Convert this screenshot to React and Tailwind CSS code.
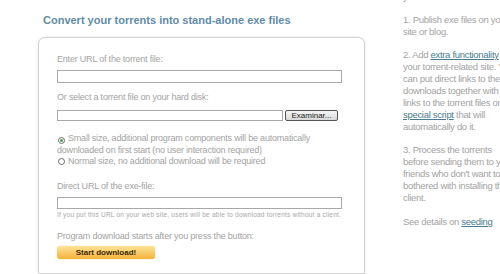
export default function App() {
  const radio = (checked) => (
    <span className="inline-flex items-center justify-center w-[7px] h-[7px] rounded-full border border-[#6b6b6b] bg-white mr-[3px] ml-[1px] align-[-1px]">
      {checked && <span className="w-[3px] h-[3px] rounded-full bg-[#3fa34d]" />}
    </span>
  );
  return (
    <div className="w-[500px] h-[274px] overflow-hidden bg-white flex font-['Liberation_Sans',Arial,sans-serif]">
      <div className="w-[365px] shrink-0 pl-[38px] flex flex-col">
        <h1 className="pl-[5px] pt-[13px] h-[40px] text-[11px] leading-[14px] font-bold text-[#5e8ca7] whitespace-nowrap">
          Convert your torrents into stand-alone exe files
        </h1>
        <div className="h-[260px] rounded-t-[7px] border border-[#d3d3d3] shadow-[0_0_3px_rgba(0,0,0,0.12)] bg-white pl-[18px] pr-[22px] pt-[15px] text-[9px] tracking-[-0.2px] text-[#a3a3a3]">
          <div className="leading-[12px] whitespace-nowrap">Enter URL of the torrent file:</div>
          <div className="mt-[5px] h-[13px] border border-[#a8a8a8] bg-white" />
          <div className="mt-[8px] leading-[12px] whitespace-nowrap">Or select a torrent file on your hard disk:</div>
          <div className="mt-[7px] flex items-center gap-[2px]">
            <div className="w-[226px] h-[11px] border border-[#a8a8a8] bg-white" />
            <div className="w-[53px] h-[11px] border border-[#555] rounded-[2px] bg-gradient-to-b from-[#f6f6f6] to-[#d8d8d8] flex items-center justify-center text-[8px] tracking-normal leading-none text-[#222]">
              Examinar...
            </div>
          </div>
          <div className="mt-[12px] leading-[11.5px] whitespace-nowrap">
            <div>{radio(true)}Small size, additional program components will be automatically</div>
            <div>downloaded on first start (no user interaction required)</div>
            <div>{radio(false)}Normal size, no additional download will be required</div>
          </div>
          <div className="mt-[12.5px] leading-[12px] whitespace-nowrap">Direct URL of the exe-file:</div>
          <div className="mt-[5px] h-[12px] border border-[#a8a8a8] bg-white" />
          <div className="mt-[1px] text-[6.5px] leading-[10px] tracking-[0.22px] whitespace-nowrap text-[#a8a8a8]">
            If you put this URL on your web site, users will be able to download torrents without a client.
          </div>
          <div className="mt-[10px] leading-[12px] whitespace-nowrap">Program download starts after you press the button:</div>
          <div className="mt-[4px] w-[98px] h-[13px] rounded-[3px] bg-gradient-to-b from-[#fde493] to-[#f5b134] shadow-[0_0_1px_rgba(200,140,20,0.6)] flex items-center justify-center text-[8px] tracking-normal font-bold text-[#3b2a05] leading-none">
            Start download!
          </div>
        </div>
      </div>
      <div className="ml-[38px] shrink-0 w-[120px] text-[9.5px] leading-[12px] tracking-[-0.3px] text-[#a3a3a3] whitespace-nowrap">
        <div className="-mt-[9px]">y</div>
        <div className="mt-[11px]">
          <div>1. Publish exe files on your</div>
          <div>site or blog.</div>
        </div>
        <div className="mt-[11px]">
          <div>2. Add <span className="underline text-[#4a7c8e]">extra functionality</span> to</div>
          <div>your torrent-related site. You</div>
          <div>can put direct links to these</div>
          <div>downloads together with</div>
          <div>links to the torrent files or</div>
          <div><span className="underline text-[#4a7c8e]">special script</span> that will</div>
          <div>automatically do it.</div>
        </div>
        <div className="mt-[11px]">
          <div>3. Process the torrents</div>
          <div>before sending them to your</div>
          <div>friends who don't want to be</div>
          <div>bothered with installing the</div>
          <div>client.</div>
        </div>
        <div className="mt-[12px]">
          <div>See details on <span className="underline text-[#4a7c8e]">seeding</span></div>
        </div>
      </div>
    </div>
  );
}
